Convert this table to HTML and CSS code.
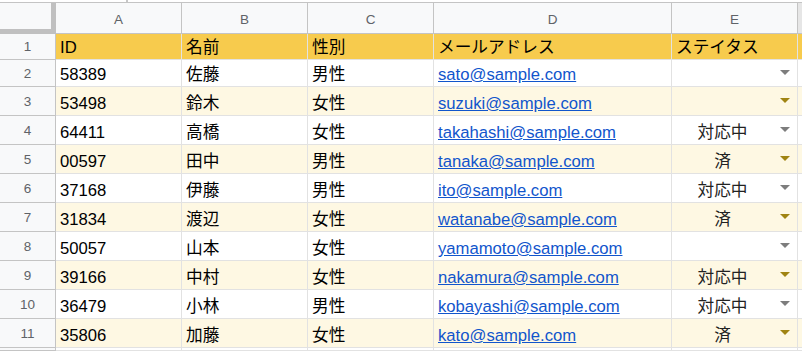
FILE: index.html
```html
<!DOCTYPE html>
<html lang="ja">
<head>
<meta charset="utf-8">
<title>Sheet</title>
<link rel="stylesheet" href="styles.css">
</head>
<body>
<div class="topbar"><span class="topmark"></span></div>
<div class="sheet">
  <div class="row hdr">
    <div class="corner"></div>
    <div class="ch">A</div>
    <div class="ch">B</div>
    <div class="ch">C</div>
    <div class="ch">D</div>
    <div class="ch">E</div>
    <div class="ch chf"></div>
  </div>

  <div class="row r1">
    <div class="rn">1</div>
    <div class="c">ID</div>
    <div class="c">名前</div>
    <div class="c">性別</div>
    <div class="c">メールアドレス</div>
    <div class="c">ステイタス</div>
    <div class="c cf"></div>
  </div>

  <div class="row r2">
    <div class="rn">2</div>
    <div class="c">58389</div>
    <div class="c">佐藤</div>
    <div class="c">男性</div>
    <div class="c"><span class="link">sato@sample.com</span></div>
    <div class="c st"><span class="sv"></span><span class="dd"></span></div>
    <div class="c cf"></div>
  </div>

  <div class="row band">
    <div class="rn">3</div>
    <div class="c">53498</div>
    <div class="c">鈴木</div>
    <div class="c">女性</div>
    <div class="c"><span class="link">suzuki@sample.com</span></div>
    <div class="c st"><span class="sv"></span><span class="dd"></span></div>
    <div class="c cf"></div>
  </div>

  <div class="row">
    <div class="rn">4</div>
    <div class="c">64411</div>
    <div class="c">高橋</div>
    <div class="c">女性</div>
    <div class="c"><span class="link">takahashi@sample.com</span></div>
    <div class="c st"><span class="sv">対応中</span><span class="dd"></span></div>
    <div class="c cf"></div>
  </div>

  <div class="row band">
    <div class="rn">5</div>
    <div class="c">00597</div>
    <div class="c">田中</div>
    <div class="c">男性</div>
    <div class="c"><span class="link">tanaka@sample.com</span></div>
    <div class="c st"><span class="sv">済</span><span class="dd"></span></div>
    <div class="c cf"></div>
  </div>

  <div class="row">
    <div class="rn">6</div>
    <div class="c">37168</div>
    <div class="c">伊藤</div>
    <div class="c">男性</div>
    <div class="c"><span class="link">ito@sample.com</span></div>
    <div class="c st"><span class="sv">対応中</span><span class="dd"></span></div>
    <div class="c cf"></div>
  </div>

  <div class="row band">
    <div class="rn">7</div>
    <div class="c">31834</div>
    <div class="c">渡辺</div>
    <div class="c">女性</div>
    <div class="c"><span class="link">watanabe@sample.com</span></div>
    <div class="c st"><span class="sv">済</span><span class="dd"></span></div>
    <div class="c cf"></div>
  </div>

  <div class="row">
    <div class="rn">8</div>
    <div class="c">50057</div>
    <div class="c">山本</div>
    <div class="c">女性</div>
    <div class="c"><span class="link">yamamoto@sample.com</span></div>
    <div class="c st"><span class="sv"></span><span class="dd"></span></div>
    <div class="c cf"></div>
  </div>

  <div class="row band">
    <div class="rn">9</div>
    <div class="c">39166</div>
    <div class="c">中村</div>
    <div class="c">女性</div>
    <div class="c"><span class="link">nakamura@sample.com</span></div>
    <div class="c st"><span class="sv">対応中</span><span class="dd"></span></div>
    <div class="c cf"></div>
  </div>

  <div class="row">
    <div class="rn">10</div>
    <div class="c">36479</div>
    <div class="c">小林</div>
    <div class="c">男性</div>
    <div class="c"><span class="link">kobayashi@sample.com</span></div>
    <div class="c st"><span class="sv">対応中</span><span class="dd"></span></div>
    <div class="c cf"></div>
  </div>

  <div class="row band">
    <div class="rn">11</div>
    <div class="c">35806</div>
    <div class="c">加藤</div>
    <div class="c">女性</div>
    <div class="c"><span class="link">kato@sample.com</span></div>
    <div class="c st"><span class="sv">済</span><span class="dd"></span></div>
    <div class="c cf"></div>
  </div>

  <div class="row rlast">
    <div class="rn"></div>
    <div class="c"></div>
    <div class="c"></div>
    <div class="c"></div>
    <div class="c"></div>
    <div class="c"></div>
    <div class="c cf"></div>
  </div>
</div>
</body>
</html>
```

FILE: styles.css
```css
* {
  box-sizing: border-box;
}

html,
body {
  margin: 0;
  padding: 0;
  background: #ffffff;
}

body {
  width: 802px;
  height: 351px;
  overflow: hidden;
  font-family: "Liberation Sans", "Noto Sans CJK JP", Arial, sans-serif;
}

.topbar {
  height: 2px;
  display: flex;
}

.topmark {
  width: 2px;
  margin-left: 126px;
  background: #c7c7c7;
}

.row {
  display: grid;
  grid-template-columns: 56px 126px 126px 126px 238px 126px 1fr;
  height: 29px;
}

.hdr {
  height: 32px;
  border-top: 1px solid #c4c4c4;
  background: #f8f9fa;
}

.corner {
  background: #f8f9fa;
  border-right: 5px solid #c0c0c0;
  border-bottom: 5px solid #c0c0c0;
}

.ch {
  display: flex;
  align-items: center;
  justify-content: center;
  padding-top: 2px;
  border-right: 1px solid #c4c4c4;
  border-bottom: 1px solid #c4c4c4;
  font-size: 13.5px;
  color: #5f6368;
}

.chf {
  background: #e6e6e6;
  border-right: none;
}

.rn {
  display: flex;
  align-items: center;
  justify-content: center;
  background: #f8f9fa;
  border-right: 1px solid #c4c4c4;
  border-bottom: 1px solid #c4c4c4;
  font-size: 13.5px;
  color: #5f6368;
}

.c {
  display: flex;
  align-items: flex-end;
  padding: 0 4px 1px 4px;
  border-right: 1px solid #e2e2e2;
  border-bottom: 1px solid #e2e2e2;
  font-size: 16.67px;
  line-height: 20px;
  color: #000000;
  white-space: nowrap;
  overflow: hidden;
}

.cf {
  border-right: none;
  padding: 0;
}

.r1 {
  height: 26px;
}

.r1 .c {
  background: #f7cb4d;
}

.r2 {
  height: 27px;
}

.rlast {
  height: 3px;
}

.band .c {
  background: #fef8e3;
}

.link {
  color: #1155cc;
  text-decoration: underline;
}

.st {
  padding: 0 0 1px 0;
}

.sv {
  flex: 1;
  text-align: center;
  color: #222222;
}

.dd {
  align-self: center;
  width: 0;
  height: 0;
  margin: 0 7px;
  border-left: 5px solid transparent;
  border-right: 5px solid transparent;
  border-top: 5px solid #7d7d7d;
}

.band .dd {
  border-top-color: #a08412;
}
```
